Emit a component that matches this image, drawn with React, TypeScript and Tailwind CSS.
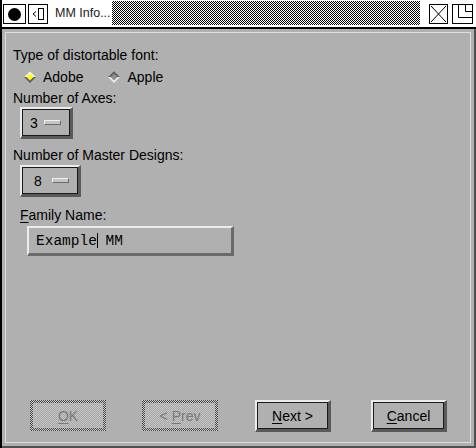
import React from 'react'

const checker = 'bg-[image:repeating-conic-gradient(#000_0_25%,#fff_0_50%)] bg-[length:2px_2px]'

function Diamond({ on }: { on: boolean }) {
  return (
    <svg width="12" height="12" viewBox="0 0 12 12" className="shrink-0">
      <polygon points="6,0 12,6 6,12 0,6" fill={on ? '#5e5e5e' : '#ececec'} />
      <polygon points="6,0 12,6 0,6" fill={on ? '#f2f2f2' : '#5e5e5e'} />
      <polygon points="6,2.5 9.5,6 6,9.5 2.5,6" fill={on ? '#ffff00' : '#8e8e8e'} />
    </svg>
  )
}

function MenuButton({ value, width, padLeft, gap }: { value: string; width: string; padLeft: string; gap: string }) {
  return (
    <div className={`${width} h-[32px] border-t-2 border-l-2 border-t-[#ececec] border-l-[#ececec] border-b-[3px] border-r-[3px] border-b-[#5a5a5a] border-r-[#5a5a5a]`}>
      <div className={`h-full border border-[#1a1a1a] flex items-center ${padLeft} ${gap}`}>
        <span className="leading-4">{value}</span>
        <span className="w-[17px] h-[5px] bg-[#c4c4c4] border-t border-l border-t-[#f0f0f0] border-l-[#f0f0f0] border-b border-r border-b-[#6a6a6a] border-r-[#6a6a6a]" />
      </div>
    </div>
  )
}

function PushButton({ children, className }: { children: React.ReactNode; className?: string }) {
  return (
    <div className={`w-[76px] h-[32px] border-t-2 border-l-2 border-t-[#ececec] border-l-[#ececec] border-b-[3px] border-r-[3px] border-b-[#5a5a5a] border-r-[#5a5a5a] ${className ?? ''}`}>
      <div className="h-full border border-[#1a1a1a] flex items-center justify-center leading-4 whitespace-pre">{children}</div>
    </div>
  )
}

function DisabledButton({ children, className }: { children: React.ReactNode; className?: string }) {
  return (
    <div className={`w-[76px] h-[31px] p-[3px] bg-[image:repeating-conic-gradient(#4a4a4a_0_25%,#c8c8c8_0_50%)] bg-[length:2px_2px] ${className ?? ''}`}>
      <div className="h-full flex items-center justify-center leading-4 whitespace-pre text-[#7a7a7a] bg-[image:repeating-conic-gradient(#a6a6a6_0_25%,#c6c6c6_0_50%)] bg-[length:2px_2px]">
        {children}
      </div>
    </div>
  )
}

export default function App() {
  return (
    <div className="w-[476px] h-[448px] flex flex-col bg-white border-l-2 border-black font-['Liberation_Sans',Arial,sans-serif] text-[14px] text-black">
      {/* title bar */}
      <div className="h-[29px] shrink-0 flex items-start border-b-2 border-black">
        <div className="ml-[1px] mt-[4px] w-[23px] h-[20px] border border-black flex items-center justify-center">
          <div className="w-[13px] h-[13px] rounded-full bg-black" />
        </div>
        <div className="ml-[2px] mt-[4px] w-[20px] h-[20px] border border-black flex items-center justify-center">
          <svg width="14" height="12" viewBox="0 0 14 12">
            <path d="M5 3.5 L2 6 L5 8.5" stroke="#000" fill="none" strokeWidth="1" />
            <rect x="7.5" y="0.5" width="5" height="11" stroke="#000" fill="none" strokeWidth="1" />
          </svg>
        </div>
        <div className="ml-[7px] w-[57px] mt-[6px] text-[12.5px] leading-[14px] text-[#1a1a1a]">MM Info...</div>
        <div className={`flex-1 mt-[1px] h-[24px] ${checker}`} />
        <div className="ml-[9px] mt-[4px] w-[19px] h-[20px] border border-black">
          <svg width="17" height="18" viewBox="0 0 17 18">
            <path d="M1 1 L16 17 M16 1 L1 17" stroke="#000" strokeWidth="1" />
          </svg>
        </div>
        <div className="ml-[4px] mr-[3px] mt-[4px] w-[21px] h-[20px] border border-black">
          <svg width="19" height="18" viewBox="0 0 19 18">
            <path d="M5.5 0 V12.5 H19 M12.5 0 V6.5 H19" stroke="#000" fill="none" strokeWidth="1" />
          </svg>
        </div>
      </div>

      {/* panel */}
      <div className="flex-1 bg-[#b0b0b0] border-r-2 border-b-2 border-[#505050] p-[3px]">
        <div className="h-full border border-[#dedede] flex flex-col pt-[14px] pb-[10px] leading-4">
          <div className="ml-[7px] h-4">Type of distortable font:</div>
          <div className="ml-[18px] mt-[6px] h-4 flex items-center">
            <Diamond on />
            <span className="ml-[7px]">Adobe</span>
            <span className="ml-[25px]"><Diamond on={false} /></span>
            <span className="ml-[7px]">Apple</span>
          </div>
          <div className="ml-[7px] mt-[5px] h-4">Number of Axes:</div>
          <div className="ml-[14px] mt-[1px]">
            <MenuButton value="3" width="w-[53px]" padLeft="pl-[7px]" gap="gap-[6px]" />
          </div>
          <div className="ml-[7px] mt-[8px] h-4">Number of Master Designs:</div>
          <div className="ml-[14px] mt-[2px]">
            <MenuButton value="8" width="w-[61px]" padLeft="pl-[11px]" gap="gap-[10px]" />
          </div>
          <div className="ml-[14px] mt-[10px] h-4">
            <span className="underline underline-offset-[2px]">F</span>amily Name:
          </div>
          <div className="ml-[21px] mt-[3px] w-[207px] h-[30px] border-t-2 border-l-2 border-t-[#ececec] border-l-[#ececec] border-b-[3px] border-r-[3px] border-b-[#6a6a6a] border-r-[#6a6a6a] flex items-center pl-[7px] font-['Liberation_Mono','Courier_New',monospace] text-[14.5px]">
            <span className="whitespace-pre">Example</span>
            <span className="inline-block w-px h-[15px] bg-black -mr-px" />
            <span className="whitespace-pre"> MM</span>
          </div>

          <div className="flex-1" />

          <div className="flex items-start">
            <DisabledButton className="ml-[24px]">
              <span className="underline underline-offset-[2px]">O</span>K
            </DisabledButton>
            <DisabledButton className="ml-[36px]">
              <span>{'<\u00a0'}</span><span className="underline underline-offset-[2px]">P</span>rev
            </DisabledButton>
            <PushButton className="ml-[37px]">
              <span className="underline underline-offset-[2px]">N</span>ext &gt;
            </PushButton>
            <PushButton className="ml-[40px]">
              <span className="underline underline-offset-[2px]">C</span>ancel
            </PushButton>
          </div>
        </div>
      </div>
    </div>
  )
}
